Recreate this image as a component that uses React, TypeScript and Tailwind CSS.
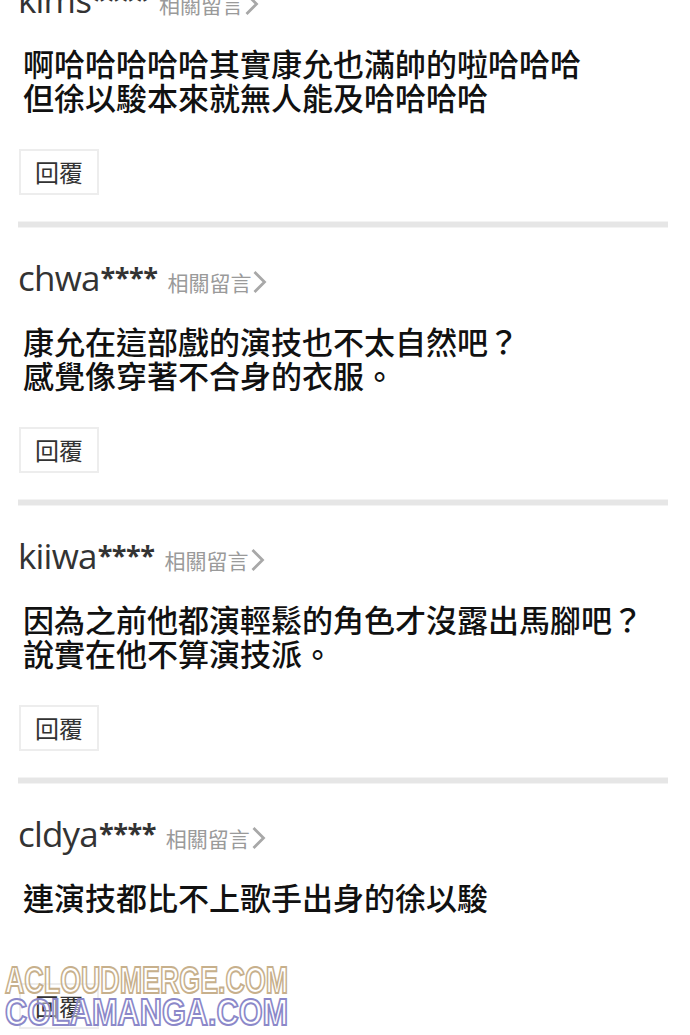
const comments = [
  {
    user: "kims",
    lines: ["啊哈哈哈哈哈其實康允也滿帥的啦哈哈哈", "但徐以駿本來就無人能及哈哈哈哈"],
  },
  {
    user: "chwa",
    lines: ["康允在這部戲的演技也不太自然吧？", "感覺像穿著不合身的衣服。"],
  },
  {
    user: "kiiwa",
    lines: ["因為之前他都演輕鬆的角色才沒露出馬腳吧？", "說實在他不算演技派。"],
  },
  {
    user: "cldya",
    lines: ["連演技都比不上歌手出身的徐以駿"],
  },
];

function Chevron() {
  return (
    <svg width="15" height="24" viewBox="0 0 15 24" className="ml-[1px]">
      <path d="M2.5 2 L12.5 12 L2.5 22" fill="none" stroke="#a8a8a8" strokeWidth="2.8" />
    </svg>
  );
}

function Comment({ user, lines, last }: { user: string; lines: string[]; last?: boolean }) {
  return (
    <div>
      {/* header */}
      <div className="flex h-[44px] items-end pb-[3px] pl-[18px]">
        <span className="font-['Open_Sans',sans-serif] text-[35px] leading-none tracking-[-0.8px] text-[#333]">
          {user}
        </span>
        <span className="mb-[5px] ml-[1px] font-['Open_Sans',sans-serif] text-[27px] font-bold leading-none tracking-[-0.5px] text-[#333]">
          ****
        </span>
        <span className="mb-[1px] ml-[10px] flex items-center font-['Noto_Sans_CJK_TC',sans-serif] text-[21px] leading-none text-[#9a9a9a]">
          相關留言
          <Chevron />
        </span>
      </div>

      {/* body */}
      <div className="mt-[26px] min-h-[68px] pl-[23px] font-['Noto_Sans_CJK_TC',sans-serif] text-[31px] font-medium leading-[34px] text-[#111]">
        {lines.map((l) => (
          <div key={l}>{l}</div>
        ))}
      </div>

      {/* reply */}
      <div className="ml-[19px] mt-[35px] flex h-[46px] w-[80px] items-center justify-center border-2 border-[#ededed] font-['Noto_Sans_CJK_TC',sans-serif] text-[24px] leading-none text-[#333]">
        回覆
      </div>

      {!last && (
        <div className="ml-[18px] mr-[22px] mt-[26px] mb-[26px] h-[7px] border-y border-[#f3f3f3] bg-[#e6e6e6]" />
      )}
    </div>
  );
}

export default function App() {
  return (
    <div className="relative h-[1035px] w-[690px] overflow-hidden bg-white">
      <div className="-mt-[24px]">
        {comments.map((c, i) => (
          <Comment key={c.user} user={c.user} lines={c.lines} last={i === comments.length - 1} />
        ))}
      </div>

      {/* watermark */}
      <div className="absolute left-[5px] top-[962px] font-['Liberation_Sans',sans-serif] font-bold leading-none">
        <div className="origin-left scale-x-[0.725] whitespace-nowrap text-[37px] text-[rgba(255,255,255,0.55)] [-webkit-text-stroke:2px_#c7b08c]">
          ACLOUDMERGE.COM
        </div>
        <div className="mt-[-5px] origin-left scale-x-[0.83] whitespace-nowrap text-[37px] text-[rgba(255,255,255,0.45)] [-webkit-text-stroke:2px_#8b88c9]">
          COLAMANGA.COM
        </div>
      </div>
    </div>
  );
}
